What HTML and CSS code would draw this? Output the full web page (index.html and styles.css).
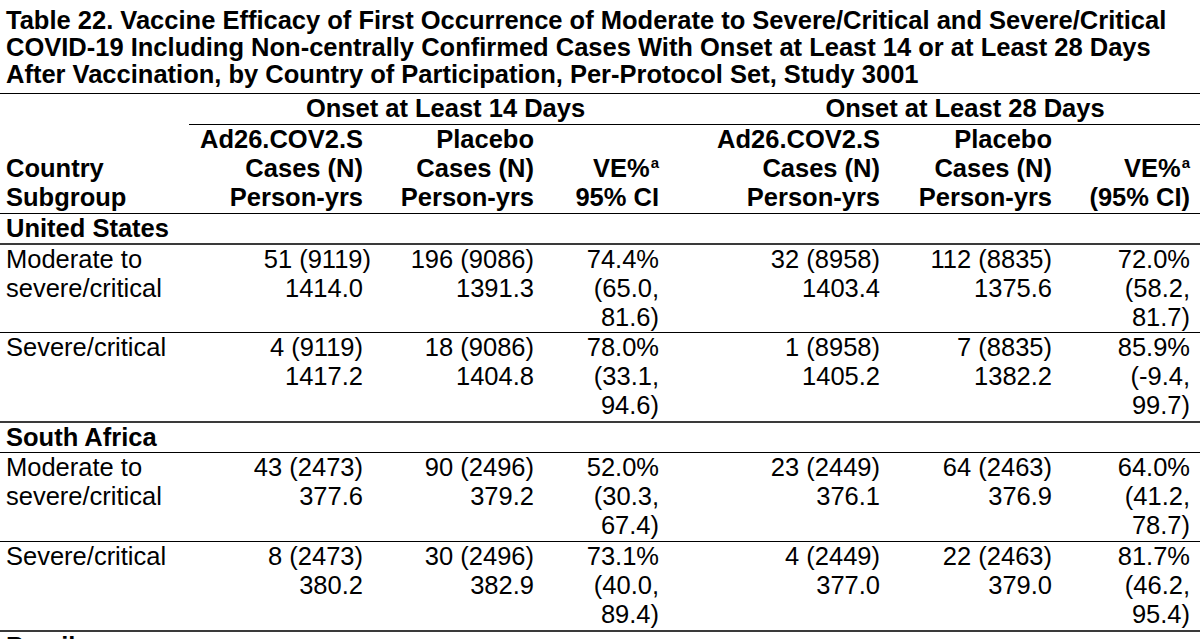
FILE: index.html
```html
<!DOCTYPE html>
<html lang="en">
<head>
<meta charset="utf-8">
<title>Table 22</title>
<link rel="stylesheet" href="styles.css">
</head>
<body>
<div class="doc">
  <p class="title">Table 22. Vaccine Efficacy of First Occurrence of Moderate to Severe/Critical and Severe/Critical<br>COVID-19 Including Non-centrally Confirmed Cases With Onset at Least 14 or at Least 28 Days<br>After Vaccination, by Country of Participation, Per-Protocol Set, Study 3001</p>
  <table class="vt">
    <colgroup>
      <col class="c0"><col class="c1"><col class="c2"><col class="c3"><col class="c4"><col class="c5"><col class="c6">
    </colgroup>
    <thead>
      <tr class="span-row">
        <th rowspan="2" class="cg">Country<br>Subgroup</th>
        <th colspan="3" class="onset onset14">Onset at Least 14 Days</th>
        <th colspan="3" class="onset onset28">Onset at Least 28 Days</th>
      </tr>
      <tr class="head-row">
        <th>Ad26.COV2.S<br>Cases (N)<br>Person-yrs</th>
        <th>Placebo<br>Cases (N)<br>Person-yrs</th>
        <th>VE%<sup class="sup">a</sup><br>95% CI</th>
        <th>Ad26.COV2.S<br>Cases (N)<br>Person-yrs</th>
        <th>Placebo<br>Cases (N)<br>Person-yrs</th>
        <th>VE%<sup class="sup">a</sup><br>(95% CI)</th>
      </tr>
    </thead>
    <tbody>
      <tr class="country country-first"><td colspan="7">United States</td></tr>
      <tr class="data data-first">
        <td class="lab">Moderate to<br>severe/critical</td>
        <td><span class="hang">51 (9119)</span><br>1414.0</td>
        <td>196 (9086)<br>1391.3</td>
        <td>74.4%<br>(65.0,<br>81.6)</td>
        <td>32 (8958)<br>1403.4</td>
        <td>112 (8835)<br>1375.6</td>
        <td>72.0%<br>(58.2,<br>81.7)</td>
      </tr>
      <tr class="data data-last">
        <td class="lab">Severe/critical</td>
        <td>4 (9119)<br>1417.2</td>
        <td>18 (9086)<br>1404.8</td>
        <td>78.0%<br>(33.1,<br>94.6)</td>
        <td>1 (8958)<br>1405.2</td>
        <td>7 (8835)<br>1382.2</td>
        <td>85.9%<br>(-9.4,<br>99.7)</td>
      </tr>
      <tr class="country"><td colspan="7">South Africa</td></tr>
      <tr class="data">
        <td class="lab">Moderate to<br>severe/critical</td>
        <td>43 (2473)<br>377.6</td>
        <td>90 (2496)<br>379.2</td>
        <td>52.0%<br>(30.3,<br>67.4)</td>
        <td>23 (2449)<br>376.1</td>
        <td>64 (2463)<br>376.9</td>
        <td>64.0%<br>(41.2,<br>78.7)</td>
      </tr>
      <tr class="data data-last">
        <td class="lab">Severe/critical</td>
        <td>8 (2473)<br>380.2</td>
        <td>30 (2496)<br>382.9</td>
        <td>73.1%<br>(40.0,<br>89.4)</td>
        <td>4 (2449)<br>377.0</td>
        <td>22 (2463)<br>379.0</td>
        <td>81.7%<br>(46.2,<br>95.4)</td>
      </tr>
      <tr class="country"><td colspan="7">Brazil</td></tr>
    </tbody>
  </table>
</div>
</body>
</html>
```

FILE: styles.css
```css
html, body {
  margin: 0;
  padding: 0;
  background: #ffffff;
  overflow: hidden;
}

.doc {
  width: 1200px;
  font-family: "Liberation Sans", Arial, sans-serif;
  font-size: 25.5px;
  color: #000000;
}

.title {
  margin: 0;
  padding: 7px 6px 5px 6px;
  font-weight: bold;
  line-height: 27px;
  white-space: nowrap;
  border-bottom: 1px solid #000000;
}

.vt {
  width: 1200px;
  table-layout: fixed;
  border-collapse: separate;
  border-spacing: 0;
  line-height: 29px;
}

.c0 { width: 189px; }
.c1 { width: 184px; }
.c2 { width: 171px; }
.c3 { width: 125px; }
.c4 { width: 221px; }
.c5 { width: 172px; }
.c6 { width: 138px; }

.vt th,
.vt td {
  padding: 0 10px 0 6px;
  text-align: right;
  vertical-align: top;
  white-space: nowrap;
}

.vt th {
  font-weight: bold;
}

.vt th.onset {
  text-align: center;
  padding-bottom: 1px;
  border-bottom: 1px solid #000000;
}

.vt th.onset14 { padding-left: 43px; }
.vt th.onset28 { padding-left: 71px; }

.vt th.cg {
  text-align: left;
  vertical-align: bottom;
  padding-bottom: 1px;
  border-bottom: 1px solid #000000;
}

.head-row th {
  vertical-align: bottom;
  padding-bottom: 1px;
  border-bottom: 1px solid #000000;
}

.sup {
  font-size: 15px;
  line-height: 0;
  vertical-align: 9px;
  margin-left: 1px;
}

.country td {
  text-align: left;
  font-weight: bold;
  border-bottom: 1px solid #000000;
}

.country-first td {
  border-bottom: 2px solid #3a3a3a;
}

.data td {
  padding-bottom: 1px;
  border-bottom: 1px solid #000000;
}

.data-first td {
  padding-bottom: 0;
}

.data-last td {
  border-bottom: 2px solid #3a3a3a;
}

.vt td.lab {
  text-align: left;
}

.hang {
  margin-right: -8px;
}
```
